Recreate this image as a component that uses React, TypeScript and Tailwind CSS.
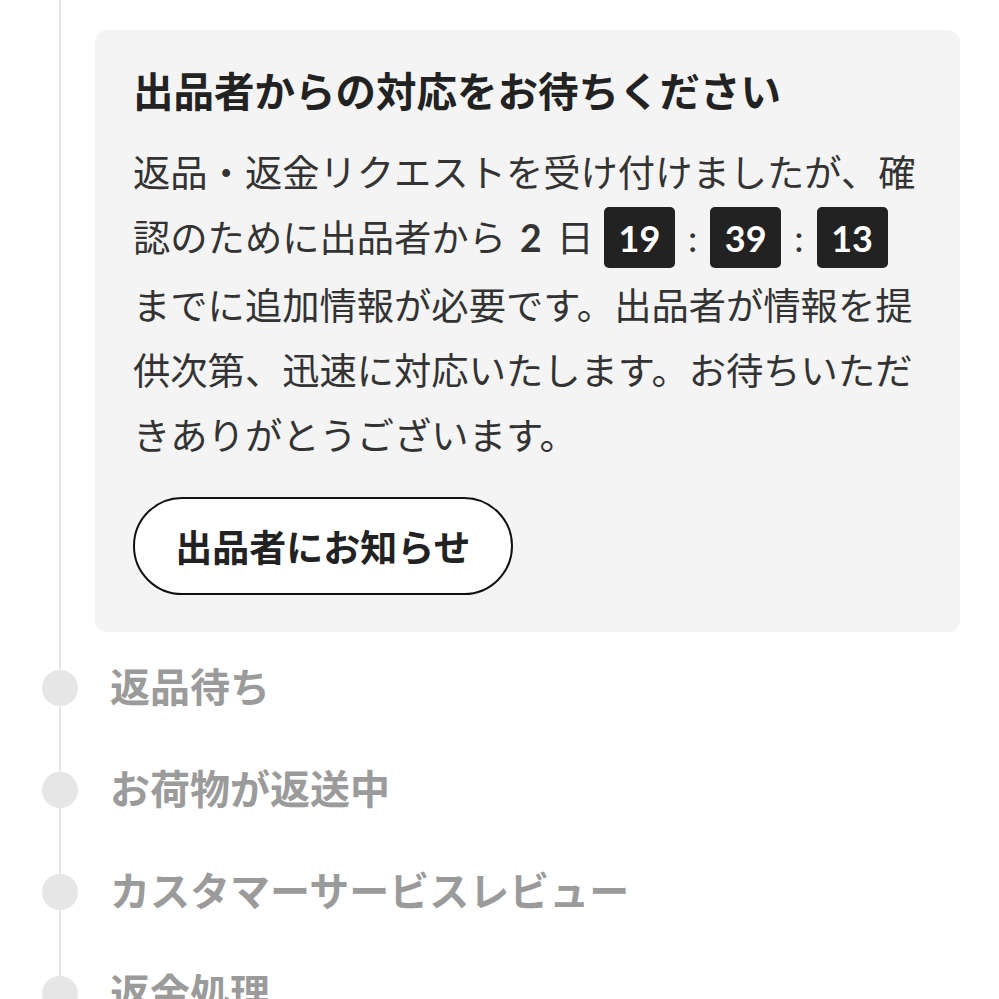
import React from "react";

const steps = ["返品待ち", "お荷物が返送中", "カスタマーサービスレビュー", "返金処理"];

function TimeBox({ value }: { value: string }) {
  return (
    <span
      className="-mt-[4px] mb-[4px] inline-flex h-[61px] w-[71px] items-center justify-center rounded-[5px] bg-[#222222] align-middle text-[36px] font-bold leading-none text-white"
      style={{ fontFamily: "Lato, 'Noto Sans', sans-serif" }}
    >
      {value}
    </span>
  );
}

export default function App() {
  return (
    <div
      className="relative h-[999px] w-[999px] overflow-hidden bg-white"
      style={{ fontFamily: '"Noto Sans CJK JP", "Noto Sans", sans-serif' }}
    >
      {/* timeline rail, sits behind the dots */}
      <div className="absolute left-[59px] top-0 h-full w-[2px] bg-[#e6e6e6]" />

      <div className="relative flex flex-col pt-[30px]">
        <div className="ml-[95px] mr-[39px] flex flex-col items-start rounded-[12px] bg-[#f4f4f4] px-[38px] pb-[37px] pt-[32px]">
          <h2 className="text-[40.5px] font-bold leading-[56px] text-[#222222]">
            出品者からの対応をお待ちください
          </h2>
          <p className="mt-[21px] text-[37.3px] leading-[65px] text-[#333333]">
            返品・返金リクエストを受け付けましたが、確認のために出品者から
            <span className="ml-[14px] font-bold" style={{ fontFamily: "Lato, sans-serif" }}>2</span>
            <span className="ml-[15px] mr-[10px]">日</span>
            <TimeBox value="19" />
            <span className="mx-[13px]" style={{ fontFamily: "Lato, sans-serif" }}>:</span>
            <TimeBox value="39" />
            <span className="mx-[13px]" style={{ fontFamily: "Lato, sans-serif" }}>:</span>
            <TimeBox value="13" />
            までに追加情報が必要です。出品者が情報を提供次第、迅速に対応いたします。お待ちいただきありがとうございます。
          </p>
          <button className="mt-[30px] flex h-[98px] w-[380px] items-center justify-center rounded-full border-[2.5px] border-[#111111] bg-white text-[37px] font-bold text-[#222222]">
            出品者にお知らせ
          </button>
        </div>

        <ul className="mt-[5px] flex flex-col">
          {steps.map((s) => (
            <li key={s} className="flex h-[102px] items-center gap-[32px] pl-[42px]">
              <span className="h-[36px] w-[36px] shrink-0 rounded-full bg-[#e6e6e6]" />
              <span className="pb-[6px] text-[40px] font-bold text-[#9b9b9b]">{s}</span>
            </li>
          ))}
        </ul>
      </div>
    </div>
  );
}
